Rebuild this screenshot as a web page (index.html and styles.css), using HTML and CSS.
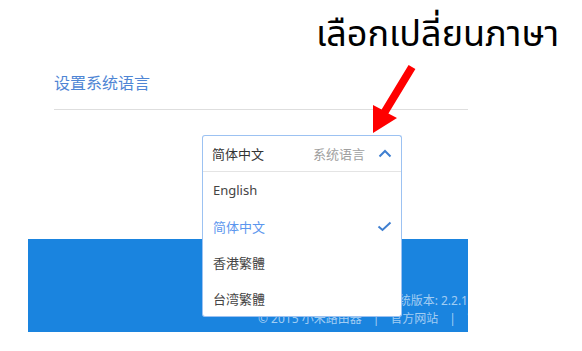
FILE: index.html
```html
<!DOCTYPE html>
<html lang="zh-CN">
<head>
    <meta charset="UTF-8">
    <meta name="viewport" content="width=device-width, initial-scale=1.0">
    <title>设置系统语言</title>
    <link rel="stylesheet" href="styles.css">
</head>
<body>
    <div class="page">
        <div class="settings">
            <h2 class="title">设置系统语言</h2>
            <div class="select-wrap">
                <div class="select">
                    <div class="select-head">
                        <span class="current">简体中文</span>
                        <span class="hint">系统语言</span>
                        <svg class="chevron" width="14" height="9" viewBox="0 0 14 9">
                            <polyline points="1.5,7.5 7,2 12.5,7.5" fill="none" stroke="#3f7fd0" stroke-width="2"/>
                        </svg>
                    </div>
                    <ul class="menu">
                        <li>English</li>
                        <li class="active">简体中文
                            <svg class="check" width="15" height="11" viewBox="0 0 15 11">
                                <polyline points="1.5,5.5 5.5,9 13.5,1.5" fill="none" stroke="#3f7fd0" stroke-width="2"/>
                            </svg>
                        </li>
                        <li>香港繁體</li>
                        <li>台湾繁體</li>
                    </ul>
                </div>
            </div>
        </div>
        <div class="footer">
            <p class="version">系统版本: 2.2.1</p>
            <p class="links">© 2015 小米路由器<span class="sep">|</span>官方网站<span class="sep">|</span>官方微博</p>
        </div>
    </div>

    <div class="note">
        <p class="note-text">เลือกเปลี่ยนภาษา</p>
        <svg class="arrow" width="60" height="80" viewBox="0 0 60 80">
            <polygon points="48.6,5 55.4,9 28.4,53.5 37,58 13,73 13,45 21.6,49.5" fill="#ff0000"/>
        </svg>
    </div>
</body>
</html>
```

FILE: styles.css
```css
body {
    margin: 0;
    background: #fff;
    font-family: 'Noto Sans', 'Noto Sans CJK SC', sans-serif;
    color: #333;
}
.page {
    width: 440px;
    margin-left: 28px;
    overflow: hidden;
}
.settings {
    margin-left: 26px;
    padding-top: 72px;
}
.title {
    margin: 0;
    font-size: 16px;
    font-weight: normal;
    line-height: 22px;
    color: #4e85d4;
    padding-bottom: 15px;
    border-bottom: 1px solid #dedede;
}
.select-wrap {
    padding-top: 25px;
    padding-left: 148px;
    height: 36px;
}
.select {
    position: relative;
    width: 198px;
    border: 1px solid #9cc2f2;
    border-bottom: none;
    border-radius: 3px 3px 0 0;
    background: #fff;
    z-index: 2;
}
.select-head {
    display: flex;
    align-items: center;
    height: 35px;
    padding: 0 9px 0 9px;
    border-bottom: 1px solid #e4e4e4;
    font-size: 13px;
}
.current {
    flex: 1;
    color: #333;
}
.hint {
    color: #a0a0a0;
    margin-right: 13px;
}
.menu {
    position: absolute;
    top: 100%;
    left: -1px;
    right: -1px;
    margin: 0;
    padding: 0;
    list-style: none;
    background: #fff;
    border: 1px solid #9cc2f2;
    border-top: none;
    border-radius: 0 0 3px 3px;
}
.menu li {
    display: flex;
    align-items: center;
    justify-content: space-between;
    height: 36px;
    padding: 0 9px 0 10px;
    font-size: 13px;
    color: #444;
}
.menu li.active {
    color: #5b96ee;
}
.footer {
    margin-top: 68px;
    height: 93px;
    box-sizing: border-box;
    padding-top: 53px;
    background: #1a84df;
    color: rgba(255, 255, 255, 0.6);
    font-size: 12px;
    line-height: 18px;
    white-space: nowrap;
    overflow: hidden;
}
.footer p {
    margin: 0;
}
.version {
    text-align: right;
}
.links {
    padding-left: 230px;
}
.sep {
    margin: 0 11px;
}
.note {
    position: absolute;
    left: 0;
    top: 0;
}
.note-text {
    position: absolute;
    left: 316px;
    top: 11px;
    margin: 0;
    font-family: 'Noto Sans Thai', 'Noto Sans', 'DejaVu Sans', sans-serif;
    font-size: 36px;
    line-height: 48px;
    color: #000;
    white-space: nowrap;
}
.arrow {
    position: absolute;
    left: 360px;
    top: 60px;
    z-index: 3;
}
```
